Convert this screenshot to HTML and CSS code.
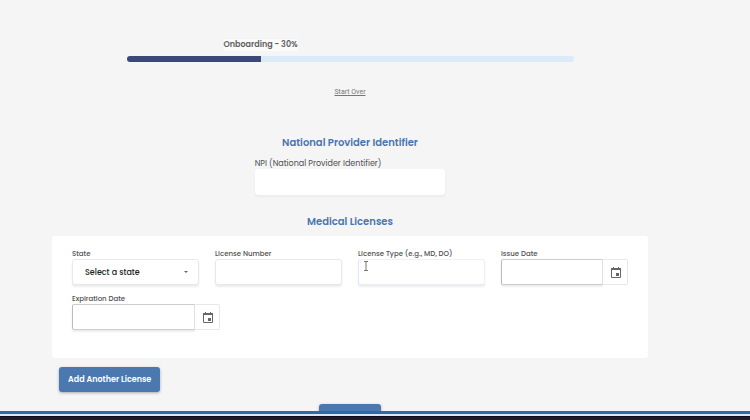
FILE: index.html
```html
<!DOCTYPE html>
<html lang="en">
<head>
<meta charset="utf-8">
<meta name="viewport" content="width=device-width, initial-scale=1">
<title>Onboarding</title>
<link rel="stylesheet" href="styles.css">
</head>
<body>
<main class="page">
  <section class="progress">
    <div class="progress-label"><span id="progress-text">Onboarding - 30%</span></div>
    <div class="progress-track" role="progressbar" aria-labelledby="progress-text" aria-valuenow="30" aria-valuemin="0" aria-valuemax="100">
      <div class="progress-fill" style="width: 30%"></div>
    </div>
  </section>
  <a class="start-over" href="#">Start Over</a>
  <form class="form">
    <h2 class="title">National Provider Identifier</h2>
    <div class="npi">
      <label for="npi">NPI (National Provider Identifier)</label>
      <input class="control" id="npi" type="text">
    </div>
    <h2 class="title">Medical Licenses</h2>
    <section class="card">
      <div class="field">
        <label for="state">State</label>
        <div class="select-wrap">
          <select class="control" id="state"><option>Select a state</option></select>
          <svg class="caret" viewBox="0 0 6 4" aria-hidden="true"><path d="M1 1h4L3 3z"/></svg>
        </div>
      </div>
      <div class="field">
        <label for="number">License Number</label>
        <input class="control" id="number" type="text">
      </div>
      <div class="field">
        <label for="type">License Type (e.g., MD, DO)</label>
        <div class="type-wrap">
          <input class="control active" id="type" type="text">
          <svg class="cursor" viewBox="0 0 6 10" aria-hidden="true"><path d="M1 .5h4M3 .5v9M1 9.5h4"/></svg>
        </div>
      </div>
      <div class="field">
        <label for="issue">Issue Date</label>
        <div class="date">
          <input class="control" id="issue" type="text">
          <button class="date-button" type="button" aria-label="Choose issue date">
            <svg viewBox="0 0 10 11" aria-hidden="true"><path class="frame" d="M.5 1.5h9v9h-9z"/><path d="M0 1h10v2H0zM2 0h1v2H2zM7 0h1v2H7zM5 6h3v3H5z"/></svg>
          </button>
        </div>
      </div>
      <div class="field field-wide">
        <label for="expiry">Expiration Date</label>
        <div class="date">
          <input class="control" id="expiry" type="text">
          <button class="date-button" type="button" aria-label="Choose expiration date">
            <svg viewBox="0 0 10 11" aria-hidden="true"><path class="frame" d="M.5 1.5h9v9h-9z"/><path d="M0 1h10v2H0zM2 0h1v2H2zM7 0h1v2H7zM5 6h3v3H5z"/></svg>
          </button>
        </div>
      </div>
    </section>
    <button class="primary add" type="button">Add Another License</button>
    <button class="primary next" type="submit" aria-label="Continue"></button>
  </form>
</main>
<footer class="taskbar"></footer>
</body>
</html>
```
FILE: styles.css
```css
* { box-sizing: border-box; }

body {
  margin: 0;
  height: 100vh;
  display: flex;
  flex-direction: column;
  overflow: hidden;
  background: #f5f5f5;
  color: #505050;
  font-family: Poppins, Inter, "Open Sans", sans-serif;
  font-size: 8px;
  line-height: 12px;
}

.page {
  flex: 1;
  min-height: 0;
  overflow: hidden;
  display: flex;
  flex-direction: column;
  align-items: center;
  padding: 39px 102px 0 52px;
}

.progress { width: 75%; }

.progress-label {
  width: 60%;
  text-align: center;
  color: #606060;
  font-size: 8px;
  font-weight: 600;
}

.progress-label span {
  display: inline-block;
  background: #fbfbfb;
}

.progress-track {
  height: 6px;
  margin-top: 5px;
  overflow: hidden;
  border-radius: 3px;
  background: #dbe9f9;
}

.progress-fill {
  height: 100%;
  background: #3b487a;
}

.start-over {
  margin-top: 24px;
  color: #777;
  font-family: Roboto, sans-serif;
  font-size: 7px;
}

.form {
  width: 100%;
  display: flex;
  flex-direction: column;
  align-items: center;
  margin-top: 37px;
}

.title {
  margin: 0;
  color: #4975b0;
  font-size: 10px;
  font-weight: 600;
  line-height: 16px;
}

.npi {
  width: 32%;
  margin: 6px 0 19px;
}

label {
  display: block;
  padding-top: 1px;
  line-height: 11px;
  white-space: nowrap;
}

.npi label { font-size: 8px; }

.control {
  display: block;
  width: 100%;
  min-width: 0;
  height: 26px;
  padding: 0 12px;
  border: 1px solid #e8e8e8;
  border-radius: 3px;
  outline: 0;
  background: #fff;
  color: #222;
  font: 500 8px Poppins, Inter, sans-serif;
  box-shadow: 0 2px 2px #ececec;
}

.npi .control { border-color: #fff; }

.card {
  width: 100%;
  min-height: 122px;
  display: grid;
  grid-template-columns: repeat(4, minmax(0, 1fr));
  align-content: start;
  gap: 7px 16px;
  margin-top: 6px;
  padding: 11px 20px 28px;
  border-radius: 3px;
  background: #fff;
}

.card label {
  font-size: 7px;
  font-weight: 500;
}

.field-wide {
  grid-column: span 2;
  max-width: 148px;
}

.select-wrap, .type-wrap { position: relative; }

select.control { appearance: none; }

.caret {
  position: absolute;
  top: 11px;
  right: 10px;
  width: 6px;
  height: 4px;
  fill: #666;
}

.active { border-color: #f1f1f1 #f1f1f1 #e6edf5 #dbe9f8; }

.cursor {
  position: absolute;
  top: 2px;
  left: 5px;
  width: 6px;
  height: 10px;
  fill: none;
  stroke: #777;
}

.date { display: flex; }

.date .control {
  flex: 1;
  border-color: #ccc #e0e0e0 #ccc #bbb;
  border-radius: 2px 0 0 2px;
}

.date-button {
  width: 25px;
  height: 26px;
  display: grid;
  place-items: center;
  padding: 0 0 0 2px;
  border: 1px solid #e8e8e8;
  border-left: 0;
  border-radius: 0 2px 2px 0;
  background: #fff;
}

.date-button svg {
  width: 10px;
  height: 11px;
  fill: #666;
}

.date-button .frame {
  fill: none;
  stroke: #666;
}

.primary {
  border: 0;
  border-radius: 3px;
  background: #4c78b0;
  color: #fff;
  font: 600 8px Poppins, Inter, sans-serif;
  box-shadow: 0 1px 3px #aaa;
}

.add {
  align-self: flex-start;
  height: 25px;
  margin: 9px 0 0 7px;
  padding: 0 9px;
}

.next {
  width: 62px;
  height: 25px;
  margin-top: 12px;
}

.taskbar {
  flex: none;
  height: 9px;
  border-top: 3px solid #2e69a8;
  background: linear-gradient(#d9e7f5 2px, #080820 2px, #080820 3px, #211b20 3px);
}
```
